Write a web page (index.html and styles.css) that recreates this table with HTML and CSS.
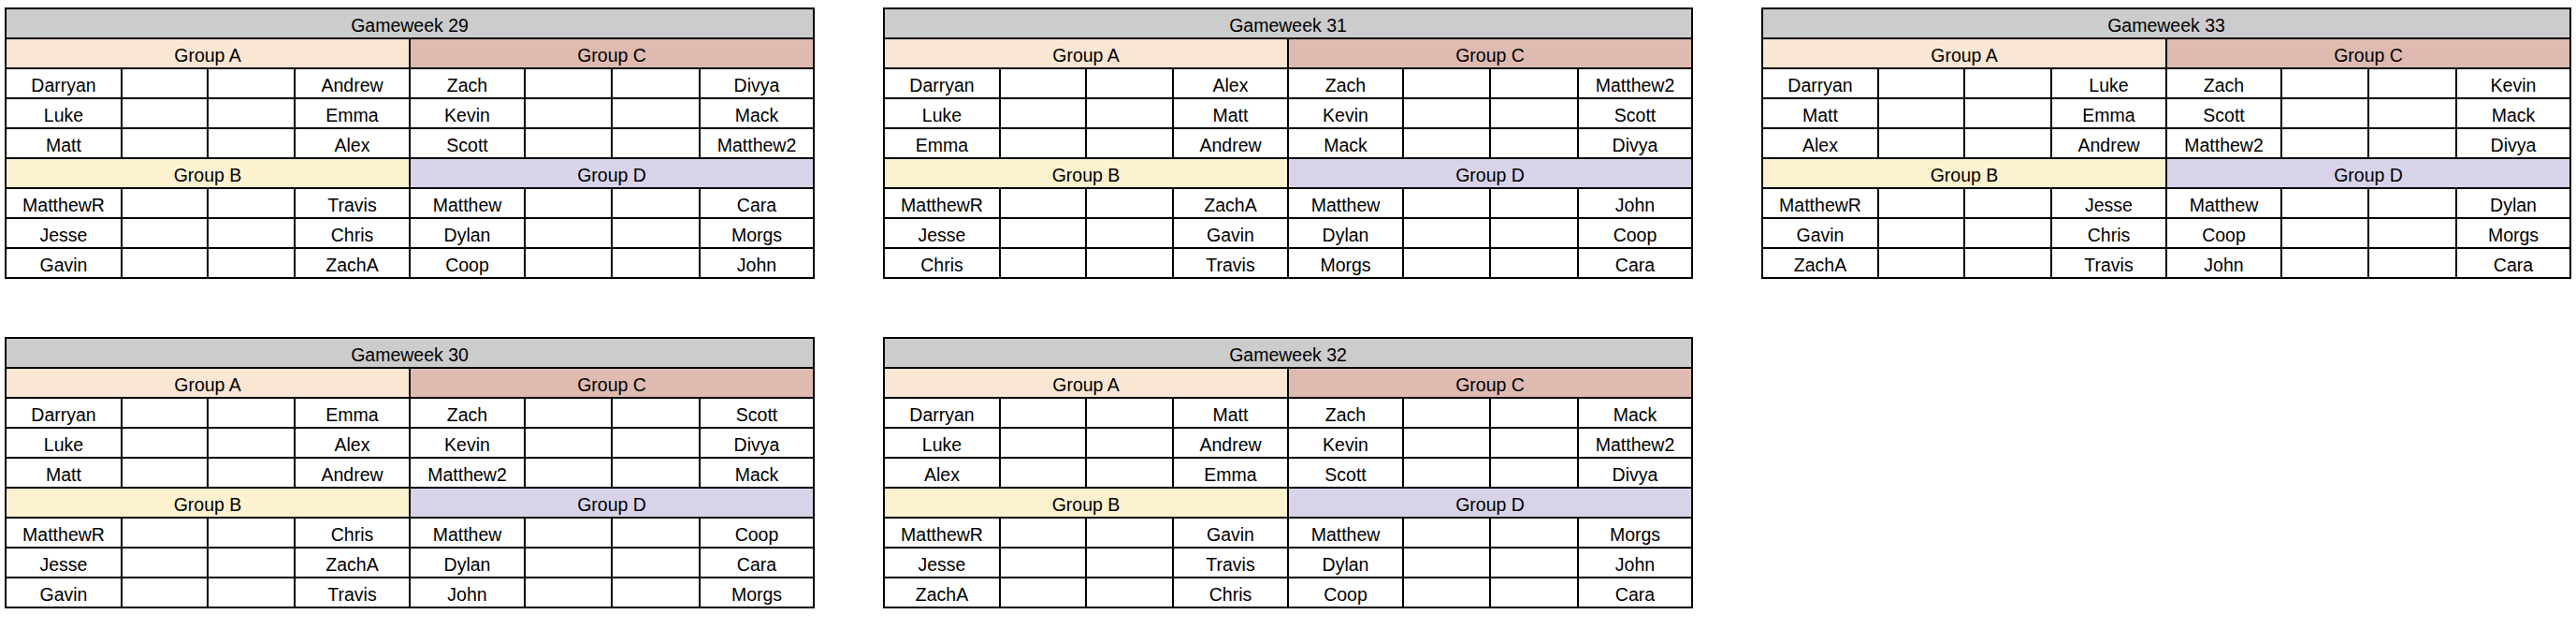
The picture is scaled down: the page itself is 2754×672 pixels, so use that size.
FILE: index.html
```html
<!DOCTYPE html>
<html>
<head>
<meta charset="utf-8">
<link rel="stylesheet" href="styles.css">
</head>
<body>
<div class="board">

<div class="week">
  <div class="title">Gameweek 29</div>
  <div class="grp ga">Group A</div><div class="grp gc">Group C</div>
  <div class="c">Darryan</div><div class="c"></div><div class="c"></div><div class="c">Andrew</div><div class="c">Zach</div><div class="c"></div><div class="c"></div><div class="c">Divya</div>
  <div class="c">Luke</div><div class="c"></div><div class="c"></div><div class="c">Emma</div><div class="c">Kevin</div><div class="c"></div><div class="c"></div><div class="c">Mack</div>
  <div class="c">Matt</div><div class="c"></div><div class="c"></div><div class="c">Alex</div><div class="c">Scott</div><div class="c"></div><div class="c"></div><div class="c">Matthew2</div>
  <div class="grp gb">Group B</div><div class="grp gd">Group D</div>
  <div class="c">MatthewR</div><div class="c"></div><div class="c"></div><div class="c">Travis</div><div class="c">Matthew</div><div class="c"></div><div class="c"></div><div class="c">Cara</div>
  <div class="c">Jesse</div><div class="c"></div><div class="c"></div><div class="c">Chris</div><div class="c">Dylan</div><div class="c"></div><div class="c"></div><div class="c">Morgs</div>
  <div class="c">Gavin</div><div class="c"></div><div class="c"></div><div class="c">ZachA</div><div class="c">Coop</div><div class="c"></div><div class="c"></div><div class="c">John</div>
</div>

<div class="week">
  <div class="title">Gameweek 31</div>
  <div class="grp ga">Group A</div><div class="grp gc">Group C</div>
  <div class="c">Darryan</div><div class="c"></div><div class="c"></div><div class="c">Alex</div><div class="c">Zach</div><div class="c"></div><div class="c"></div><div class="c">Matthew2</div>
  <div class="c">Luke</div><div class="c"></div><div class="c"></div><div class="c">Matt</div><div class="c">Kevin</div><div class="c"></div><div class="c"></div><div class="c">Scott</div>
  <div class="c">Emma</div><div class="c"></div><div class="c"></div><div class="c">Andrew</div><div class="c">Mack</div><div class="c"></div><div class="c"></div><div class="c">Divya</div>
  <div class="grp gb">Group B</div><div class="grp gd">Group D</div>
  <div class="c">MatthewR</div><div class="c"></div><div class="c"></div><div class="c">ZachA</div><div class="c">Matthew</div><div class="c"></div><div class="c"></div><div class="c">John</div>
  <div class="c">Jesse</div><div class="c"></div><div class="c"></div><div class="c">Gavin</div><div class="c">Dylan</div><div class="c"></div><div class="c"></div><div class="c">Coop</div>
  <div class="c">Chris</div><div class="c"></div><div class="c"></div><div class="c">Travis</div><div class="c">Morgs</div><div class="c"></div><div class="c"></div><div class="c">Cara</div>
</div>

<div class="week">
  <div class="title">Gameweek 33</div>
  <div class="grp ga">Group A</div><div class="grp gc">Group C</div>
  <div class="c">Darryan</div><div class="c"></div><div class="c"></div><div class="c">Luke</div><div class="c">Zach</div><div class="c"></div><div class="c"></div><div class="c">Kevin</div>
  <div class="c">Matt</div><div class="c"></div><div class="c"></div><div class="c">Emma</div><div class="c">Scott</div><div class="c"></div><div class="c"></div><div class="c">Mack</div>
  <div class="c">Alex</div><div class="c"></div><div class="c"></div><div class="c">Andrew</div><div class="c">Matthew2</div><div class="c"></div><div class="c"></div><div class="c">Divya</div>
  <div class="grp gb">Group B</div><div class="grp gd">Group D</div>
  <div class="c">MatthewR</div><div class="c"></div><div class="c"></div><div class="c">Jesse</div><div class="c">Matthew</div><div class="c"></div><div class="c"></div><div class="c">Dylan</div>
  <div class="c">Gavin</div><div class="c"></div><div class="c"></div><div class="c">Chris</div><div class="c">Coop</div><div class="c"></div><div class="c"></div><div class="c">Morgs</div>
  <div class="c">ZachA</div><div class="c"></div><div class="c"></div><div class="c">Travis</div><div class="c">John</div><div class="c"></div><div class="c"></div><div class="c">Cara</div>
</div>

<div class="week">
  <div class="title">Gameweek 30</div>
  <div class="grp ga">Group A</div><div class="grp gc">Group C</div>
  <div class="c">Darryan</div><div class="c"></div><div class="c"></div><div class="c">Emma</div><div class="c">Zach</div><div class="c"></div><div class="c"></div><div class="c">Scott</div>
  <div class="c">Luke</div><div class="c"></div><div class="c"></div><div class="c">Alex</div><div class="c">Kevin</div><div class="c"></div><div class="c"></div><div class="c">Divya</div>
  <div class="c">Matt</div><div class="c"></div><div class="c"></div><div class="c">Andrew</div><div class="c">Matthew2</div><div class="c"></div><div class="c"></div><div class="c">Mack</div>
  <div class="grp gb">Group B</div><div class="grp gd">Group D</div>
  <div class="c">MatthewR</div><div class="c"></div><div class="c"></div><div class="c">Chris</div><div class="c">Matthew</div><div class="c"></div><div class="c"></div><div class="c">Coop</div>
  <div class="c">Jesse</div><div class="c"></div><div class="c"></div><div class="c">ZachA</div><div class="c">Dylan</div><div class="c"></div><div class="c"></div><div class="c">Cara</div>
  <div class="c">Gavin</div><div class="c"></div><div class="c"></div><div class="c">Travis</div><div class="c">John</div><div class="c"></div><div class="c"></div><div class="c">Morgs</div>
</div>

<div class="week">
  <div class="title">Gameweek 32</div>
  <div class="grp ga">Group A</div><div class="grp gc">Group C</div>
  <div class="c">Darryan</div><div class="c"></div><div class="c"></div><div class="c">Matt</div><div class="c">Zach</div><div class="c"></div><div class="c"></div><div class="c">Mack</div>
  <div class="c">Luke</div><div class="c"></div><div class="c"></div><div class="c">Andrew</div><div class="c">Kevin</div><div class="c"></div><div class="c"></div><div class="c">Matthew2</div>
  <div class="c">Alex</div><div class="c"></div><div class="c"></div><div class="c">Emma</div><div class="c">Scott</div><div class="c"></div><div class="c"></div><div class="c">Divya</div>
  <div class="grp gb">Group B</div><div class="grp gd">Group D</div>
  <div class="c">MatthewR</div><div class="c"></div><div class="c"></div><div class="c">Gavin</div><div class="c">Matthew</div><div class="c"></div><div class="c"></div><div class="c">Morgs</div>
  <div class="c">Jesse</div><div class="c"></div><div class="c"></div><div class="c">Travis</div><div class="c">Dylan</div><div class="c"></div><div class="c"></div><div class="c">John</div>
  <div class="c">ZachA</div><div class="c"></div><div class="c"></div><div class="c">Chris</div><div class="c">Coop</div><div class="c"></div><div class="c"></div><div class="c">Cara</div>
</div>

</div>
</body>
</html>
```

FILE: styles.css
```css
html, body {
  margin: 0;
  padding: 0;
  background: #ffffff;
}

body {
  font-family: "Liberation Sans", Arial, sans-serif;
  color: #000000;
}

.board {
  display: grid;
  grid-template-columns: repeat(3, 866px);
  column-gap: 73px;
  row-gap: 62px;
  padding: 8px 0 0 5px;
  align-items: start;
}

.week {
  display: grid;
  grid-template-columns: 122px 90px 91px 121px 121px 91px 92px 120px;
  grid-auto-rows: 30px;
  gap: 2px;
  padding: 2px;
  background: #000000;
}

.week > div {
  display: flex;
  align-items: center;
  justify-content: center;
  font-size: 19.5px;
  line-height: 1;
  padding-top: 6px;
  white-space: nowrap;
  overflow: hidden;
}

.title {
  grid-column: span 8;
  background: #cccccc;
}

.grp {
  grid-column: span 4;
}

.ga { background: #f9e6d3; }
.gb { background: #fdf2d0; }
.gc { background: #dfbab1; }
.gd { background: #d8d3e8; }

.c {
  background: #ffffff;
}
```
